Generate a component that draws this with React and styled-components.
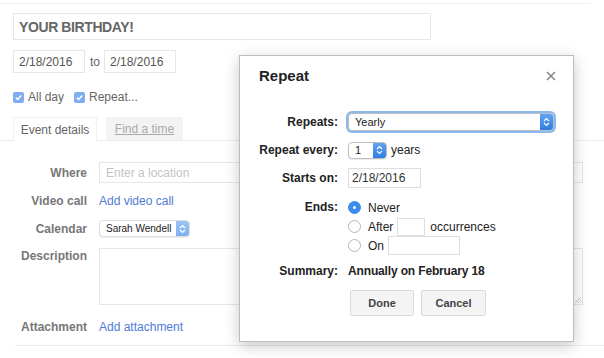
import styled, { createGlobalStyle } from "styled-components";

const Global = createGlobalStyle`
    body {
        margin: 0;
        background: #fff;
        font-family: "Liberation Sans", Arial, sans-serif;
        overflow: hidden;
    }
    * { box-sizing: border-box; }
`;

function Arrows() {
    return (
        <svg width="7" height="10" viewBox="0 0 7 10">
            <path d="M1 4 L3.5 1.6 L6 4 M1 6 L3.5 8.4 L6 6" stroke="#fff" strokeWidth="1.2" fill="none" />
        </svg>
    );
}

function Check() {
    return (
        <svg width="9" height="9" viewBox="0 0 9 9">
            <path d="M1.8 4.6 L3.7 6.5 L7.2 2.4" stroke="#fff" strokeWidth="1.5" fill="none" />
        </svg>
    );
}

export default function App() {
    return (
        <Page>
            <Global />
            <TopRule />
            <TitleBox>YOUR BIRTHDAY!</TitleBox>
            <DateRow>
                <DateBox>2/18/2016</DateBox>
                <To>to</To>
                <DateBox>2/18/2016</DateBox>
            </DateRow>
            <CheckRow>
                <CheckBox><Check /></CheckBox>
                <CheckLabel>All day</CheckLabel>
                <CheckBox $gap><Check /></CheckBox>
                <CheckLabel>Repeat...</CheckLabel>
            </CheckRow>
            <TabBar>
                <Tab $active>Event details</Tab>
                <Tab>Find a time</Tab>
            </TabBar>

            <FieldRow $mt={21} $h={21}>
                <FieldLabel>Where</FieldLabel>
                <TextBox $h={21} $placeholder>Enter a location</TextBox>
            </FieldRow>
            <FieldRow $mt={9} $h={18}>
                <FieldLabel>Video call</FieldLabel>
                <Link>Add video call</Link>
            </FieldRow>
            <FieldRow $mt={10} $h={17}>
                <FieldLabel>Calendar</FieldLabel>
                <Select $w={91} $h={17} $soft>
                    <SelectText $size={10}>Sarah Wendell</SelectText>
                    <ArrowCap $pale><Arrows /></ArrowCap>
                </Select>
            </FieldRow>
            <FieldRow $mt={11} $h={57} $top>
                <FieldLabel $top>Description</FieldLabel>
                <TextArea>
                    <Grip viewBox="0 0 6 6">
                        <path d="M0 6 L6 0 M3 6 L6 3" stroke="#bbb" strokeWidth="0.8" />
                    </Grip>
                </TextArea>
            </FieldRow>
            <FieldRow $mt={13} $h={18}>
                <FieldLabel>Attachment</FieldLabel>
                <Link>Add attachment</Link>
            </FieldRow>
            <BottomRule />

            <Dialog>
                <DialogHead>
                    <DialogTitle>Repeat</DialogTitle>
                    <Close viewBox="0 0 10 10">
                        <path d="M1 1 L9 9 M9 1 L1 9" stroke="#888" strokeWidth="1.6" />
                    </Close>
                </DialogHead>

                <Row $h={24}>
                    <Label>Repeats:</Label>
                    <Select $w={206} $h={18} $focus>
                        <SelectText>Yearly</SelectText>
                        <ArrowCap><Arrows /></ArrowCap>
                    </Select>
                </Row>
                <Row $h={32}>
                    <Label>Repeat every:</Label>
                    <Inline>
                        <Select $w={39} $h={17}>
                            <SelectText>1</SelectText>
                            <ArrowCap><Arrows /></ArrowCap>
                        </Select>
                        <Plain $ml={4}>years</Plain>
                    </Inline>
                </Row>
                <Row $h={24}>
                    <Label>Starts on:</Label>
                    <Inline>
                        <Field $w={73} $h={20}>2/18/2016</Field>
                    </Inline>
                </Row>
                <Row $mt={8} $top>
                    <Label $line>Ends:</Label>
                    <Options>
                        <Option>
                            <Radio $on />
                            <Plain>Never</Plain>
                        </Option>
                        <Option>
                            <Radio />
                            <Plain>After</Plain>
                            <Field $w={28} $h={18} $ml={4} />
                            <Plain $ml={5}>occurrences</Plain>
                        </Option>
                        <Option>
                            <Radio />
                            <Plain>On</Plain>
                            <Field $w={72} $h={19} $ml={4} />
                        </Option>
                    </Options>
                </Row>
                <Row $mt={7} $h={18}>
                    <Label>Summary:</Label>
                    <Summary>Annually on February 18</Summary>
                </Row>
                <Row $mt={10} $h={26}>
                    <span />
                    <Buttons>
                        <Button $w={64}>Done</Button>
                        <Button $w={65}>Cancel</Button>
                    </Buttons>
                </Row>
            </Dialog>
        </Page>
    );
}

const Page = styled.div`
    position: relative;
    width: 604px;
    height: 358px;
    overflow: hidden;
    padding: 3px 21px 0 13px;
    color: #666;
    font-size: 12px;
`;

const TopRule = styled.div`
    border-top: 1px solid #f0f0f0;
    margin: 0 -8px 0 -13px;
`;

const TitleBox = styled.div`
    margin-top: 9px;
    width: 418px;
    height: 27px;
    border: 1px solid #e6e6e6;
    padding-left: 5px;
    display: flex;
    align-items: center;
    font-size: 14px;
    font-weight: bold;
    letter-spacing: -0.4px;
    color: #666;
`;

const DateRow = styled.div`
    margin-top: 10px;
    height: 23px;
    display: flex;
    align-items: center;
`;

const DateBox = styled.div`
    width: 72px;
    height: 23px;
    border: 1px solid #e6e6e6;
    padding-left: 5px;
    display: flex;
    align-items: center;
    color: #555;
`;

const To = styled.span`
    margin: 0 4px 0 5px;
    color: #666;
`;

const CheckRow = styled.div`
    margin-top: 17px;
    height: 14px;
    display: flex;
    align-items: center;
`;

const CheckBox = styled.div`
    width: 11px;
    height: 11px;
    border-radius: 2px;
    background: #7eaef0;
    display: flex;
    align-items: center;
    justify-content: center;
    margin-left: ${(p) => (p.$gap ? "10px" : "0")};
`;

const CheckLabel = styled.span`
    margin-left: 4px;
    color: #666;
`;

const TabBar = styled.div`
    margin: 13px -21px 0 -13px;
    padding-left: 13px;
    height: 24px;
    display: flex;
    border-bottom: 1px solid #ececec;
`;

const Tab = styled.div`
    height: ${(p) => (p.$active ? "24px" : "23px")};
    width: ${(p) => (p.$active ? "84px" : "77px")};
    margin-left: ${(p) => (p.$active ? "0" : "9px")};
    display: flex;
    align-items: center;
    justify-content: center;
    background: ${(p) => (p.$active ? "#fff" : "#f3f3f3")};
    border: ${(p) => (p.$active ? "1px solid #f0f0f0" : "none")};
    border-bottom: none;
    color: ${(p) => (p.$active ? "#666" : "#aaa")};
    text-decoration: ${(p) => (p.$active ? "none" : "underline")};
`;

const FieldRow = styled.div`
    margin-top: ${(p) => p.$mt}px;
    height: ${(p) => p.$h}px;
    display: grid;
    grid-template-columns: 74px 1fr;
    column-gap: 12px;
    align-items: ${(p) => (p.$top ? "start" : "center")};
`;

const FieldLabel = styled.div`
    text-align: right;
    font-weight: bold;
    color: #777;
    margin-top: ${(p) => (p.$top ? "1px" : "0")};
`;

const TextBox = styled.div`
    height: ${(p) => p.$h}px;
    border: 1px solid #e6e6e6;
    padding-left: 6px;
    display: flex;
    align-items: center;
    color: ${(p) => (p.$placeholder ? "#c4c4c4" : "#555")};
`;

const TextArea = styled.div`
    position: relative;
    height: 57px;
    border: 1px solid #e6e6e6;
`;

const Grip = styled.svg`
    position: absolute;
    right: 1px;
    bottom: 1px;
    width: 6px;
    height: 6px;
`;

const Link = styled.span`
    color: #4f7bd8;
`;

const BottomRule = styled.div`
    margin: 9px -21px 0 2px;
    border-top: 1px solid #eaeaea;
`;

const Select = styled.div`
    width: ${(p) => p.$w}px;
    height: ${(p) => p.$h}px;
    display: flex;
    align-items: stretch;
    background: #fff;
    border: 1px solid ${(p) => (p.$soft ? "#ddd" : "#bdbdbd")};
    border-radius: 4px;
    box-shadow: ${(p) => (p.$focus ? "0 0 0 2px #8ab8f2" : "0 1px 1px rgba(0,0,0,0.08)")};
    overflow: hidden;
`;

const SelectText = styled.span`
    flex: 1;
    display: flex;
    align-items: center;
    padding-left: 6px;
    white-space: nowrap;
    overflow: hidden;
    font-size: ${(p) => p.$size || 11}px;
    color: #222;
`;

const ArrowCap = styled.span`
    width: 13px;
    flex-shrink: 0;
    display: flex;
    align-items: center;
    justify-content: center;
    background: ${(p) => (p.$pale ? "linear-gradient(#9cc4f4, #7eb0ef)" : "linear-gradient(#5fa3f2, #2f7de2)")};
`;

const Dialog = styled.div`
    position: absolute;
    left: 239px;
    top: 55px;
    width: 335px;
    height: 287px;
    background: #fff;
    border: 1px solid #bcbcbc;
    box-shadow: 0 4px 14px rgba(0, 0, 0, 0.22);
    color: #222;
`;

const DialogHead = styled.div`
    height: 54px;
    padding: 11px 17px 0 19px;
    display: flex;
    justify-content: space-between;
    align-items: flex-start;
`;

const DialogTitle = styled.div`
    font-size: 15px;
    font-weight: bold;
    line-height: 18px;
    color: #222;
`;

const Close = styled.svg`
    width: 10px;
    height: 10px;
    margin-top: 4px;
`;

const Row = styled.div`
    margin-top: ${(p) => p.$mt || 0}px;
    height: ${(p) => (p.$h ? `${p.$h}px` : "auto")};
    display: grid;
    grid-template-columns: 98px 1fr;
    column-gap: 10px;
    align-items: ${(p) => (p.$top ? "start" : "center")};
`;

const Label = styled.div`
    text-align: right;
    font-weight: bold;
    color: #222;
    line-height: ${(p) => (p.$line ? "19px" : "normal")};
`;

const Inline = styled.div`
    display: flex;
    align-items: center;
`;

const Plain = styled.span`
    margin-left: ${(p) => p.$ml || 0}px;
    color: #222;
`;

const Field = styled.div`
    width: ${(p) => p.$w}px;
    height: ${(p) => p.$h}px;
    margin-left: ${(p) => p.$ml || 0}px;
    border: 1px solid #dedede;
    padding-left: 3px;
    display: flex;
    align-items: center;
    color: #333;
`;

const Options = styled.div`
    display: flex;
    flex-direction: column;
`;

const Option = styled.div`
    height: 19px;
    display: flex;
    align-items: center;
`;

const Radio = styled.span`
    width: 13px;
    height: 13px;
    border-radius: 50%;
    margin-right: 7px;
    position: relative;
    background: ${(p) => (p.$on ? "#3a8bec" : "#fff")};
    border: 1px solid ${(p) => (p.$on ? "#3a8bec" : "#b5b5b5")};

    &::after {
        content: "";
        display: ${(p) => (p.$on ? "block" : "none")};
        position: absolute;
        left: 4px;
        top: 4px;
        width: 3px;
        height: 3px;
        border-radius: 50%;
        background: #fff;
    }
`;

const Summary = styled.span`
    font-weight: bold;
    color: #222;
    letter-spacing: -0.15px;
`;

const Buttons = styled.div`
    display: flex;
    gap: 7px;
    margin-left: 2px;
`;

const Button = styled.div`
    width: ${(p) => p.$w}px;
    height: 26px;
    display: flex;
    align-items: center;
    justify-content: center;
    background: #f4f4f4;
    border: 1px solid #dadada;
    border-radius: 2px;
    font-size: 11px;
    font-weight: bold;
    color: #444;
`;
